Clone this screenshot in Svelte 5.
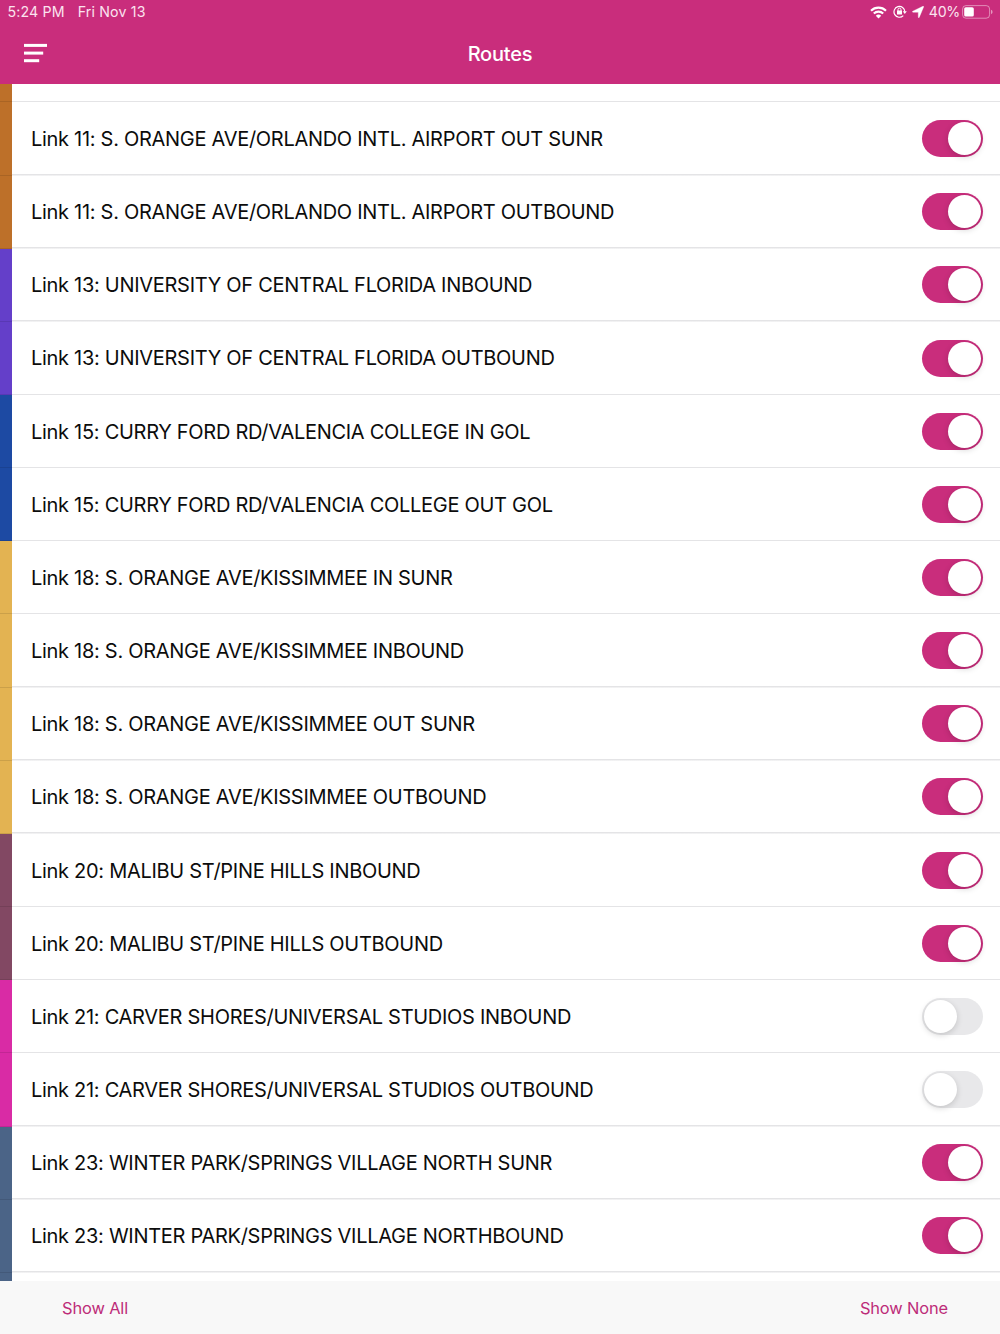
<script lang="ts">
	type Route = { name: string; color: string; on: boolean };

	let routes = $state<Route[]>([
		{ name: 'Link 11: S. ORANGE AVE/ORLANDO INTL. AIRPORT OUT SUNR', color: '#bd7029', on: true },
		{ name: 'Link 11: S. ORANGE AVE/ORLANDO INTL. AIRPORT OUTBOUND', color: '#bd7029', on: true },
		{ name: 'Link 13: UNIVERSITY OF CENTRAL FLORIDA INBOUND', color: '#643fc9', on: true },
		{ name: 'Link 13: UNIVERSITY OF CENTRAL FLORIDA OUTBOUND', color: '#643fc9', on: true },
		{ name: 'Link 15: CURRY FORD RD/VALENCIA COLLEGE IN GOL', color: '#1d4aa3', on: true },
		{ name: 'Link 15: CURRY FORD RD/VALENCIA COLLEGE OUT GOL', color: '#1d4aa3', on: true },
		{ name: 'Link 18: S. ORANGE AVE/KISSIMMEE IN SUNR', color: '#e3b352', on: true },
		{ name: 'Link 18: S. ORANGE AVE/KISSIMMEE INBOUND', color: '#e3b352', on: true },
		{ name: 'Link 18: S. ORANGE AVE/KISSIMMEE OUT SUNR', color: '#e3b352', on: true },
		{ name: 'Link 18: S. ORANGE AVE/KISSIMMEE OUTBOUND', color: '#e3b352', on: true },
		{ name: 'Link 20: MALIBU ST/PINE HILLS INBOUND', color: '#824863', on: true },
		{ name: 'Link 20: MALIBU ST/PINE HILLS OUTBOUND', color: '#824863', on: true },
		{ name: 'Link 21: CARVER SHORES/UNIVERSAL STUDIOS INBOUND', color: '#d92ba5', on: false },
		{ name: 'Link 21: CARVER SHORES/UNIVERSAL STUDIOS OUTBOUND', color: '#d92ba5', on: false },
		{ name: 'Link 23: WINTER PARK/SPRINGS VILLAGE NORTH SUNR', color: '#4b6487', on: true },
		{ name: 'Link 23: WINTER PARK/SPRINGS VILLAGE NORTHBOUND', color: '#4b6487', on: true }
	]);

	function setAll(on: boolean) {
		for (const r of routes) r.on = on;
	}
</script>

<div class="screen">
	<header>
		<div class="status">
			<span class="time">5:24 PM</span>
			<span class="date">Fri Nov 13</span>
			<div class="indicators">
				<svg class="wifi" width="17" height="13" viewBox="0 0 17 13" fill="none" stroke="#fff" stroke-width="2.1">
					<path d="M1 4.7a10.6 10.6 0 0 1 15 0" />
					<path d="M3.8 7.6a6.7 6.7 0 0 1 9.4 0" />
					<path d="M8.5 12.6 5.8 9.8a3.8 3.8 0 0 1 5.4 0z" fill="#fff" stroke="none" />
				</svg>
				<svg class="lock" width="14" height="13" viewBox="0 0 14 13" fill="none" stroke="#fff">
					<path d="M10.3 10.6A5.4 5.4 0 1 1 11.8 6.8" stroke-width="1.2" />
					<path d="M9.8 6.2h4l-2 2.7z" fill="#fff" stroke="none" />
					<rect x="4" y="5.6" width="5" height="3.9" rx=".5" fill="#fff" stroke="none" />
					<path d="M5 6V4.6a1.5 1.5 0 0 1 3 0V6" stroke-width="1" />
				</svg>
				<svg class="arrow" width="12" height="12" viewBox="0 0 12 12">
					<path d="M11.7.8 7.2 11.4q-.6.8-.9-.2V6.2H.9q-1-.4-.1-1L10.9.3q1-.3.8.5z" fill="#fff" stroke="#fff" stroke-width=".4" />
				</svg>
				<span class="percent">40%</span>
				<svg class="battery" width="31" height="14" viewBox="0 0 31 14" fill="none">
					<rect x=".6" y=".6" width="27" height="12.6" rx="3.4" stroke="#fff" stroke-opacity=".45" />
					<rect x="2.2" y="2.2" width="9.6" height="9.4" rx="1.6" fill="#fff" />
					<path d="M29 4.8q1.6.6 1.6 2.2t-1.6 2.2z" fill="#fff" fill-opacity=".5" />
				</svg>
			</div>
		</div>
		<div class="nav">
			<button class="menu" aria-label="Menu">
				<svg width="24" height="20" viewBox="0 0 24 20" fill="#fff">
					<rect x="0" y="0.9" width="23" height="3" />
					<rect x="0" y="8.6" width="19.2" height="3" />
					<rect x="0" y="16.2" width="15.2" height="3" />
				</svg>
			</button>
			<h1>Routes</h1>
		</div>
	</header>

	<main>
		<div class="row partial">
			<span class="stripe" style="background: #bd7029"></span>
		</div>
		{#each routes as route}
			<div class="row">
				<span class="stripe" style="background: {route.color}"></span>
				<span class="name">{route.name}</span>
				<button
					class="toggle"
					class:on={route.on}
					role="switch"
					aria-checked={route.on}
					aria-label={route.name}
					onclick={() => (route.on = !route.on)}
				>
					<span class="knob"></span>
				</button>
			</div>
		{/each}
		<div class="row last">
			<span class="stripe" style="background: #4b6487"></span>
		</div>
	</main>

	<footer>
		<button onclick={() => setAll(true)}>Show All</button>
		<button onclick={() => setAll(false)}>Show None</button>
	</footer>
</div>

<style>
	:global(body) {
		background: #fff;
	}
	.screen {
		width: 1000px;
		height: 1334px;
		display: flex;
		flex-direction: column;
		overflow: hidden;
		font-family: Inter, 'Liberation Sans', sans-serif;
		color: #0c0c0c;
	}
	button {
		border: 0;
		padding: 0;
		background: none;
		font: inherit;
		cursor: pointer;
	}
	header {
		height: 84px;
		flex: none;
		background: #c92d7c;
		color: #fff;
	}
	.status {
		height: 23px;
		display: flex;
		align-items: center;
		padding: 0 7px 0 7.5px;
		font-size: 14.2px;
		letter-spacing: 0.15px;
		color: #fbe3ef;
	}
	.date {
		margin-left: 13px;
	}
	.indicators {
		display: flex;
		align-items: center;
		margin-left: auto;
	}
	.wifi,
	.battery {
		margin-top: 1px;
	}
	.lock {
		margin-left: 6px;
	}
	.arrow {
		margin-left: 5px;
		margin-top: 1px;
	}
	.percent {
		margin: 0 2px 0 5px;
		letter-spacing: -0.3px;
	}
	.nav {
		height: 61px;
		display: grid;
		grid-template-columns: 100px 1fr 100px;
		align-items: center;
	}
	.menu {
		display: flex;
		padding-left: 23.6px;
		margin-top: -3px;
	}
	h1 {
		margin: 0;
		text-align: center;
		font-size: 20px;
		font-weight: 500;
		letter-spacing: -0.2px;
		line-height: 62px;
	}
	main {
		flex: 1;
		min-height: 0;
		overflow: hidden;
	}
	.row {
		height: 73.16px;
		box-sizing: border-box;
		display: flex;
		align-items: center;
		padding-right: 17px;
		background: linear-gradient(#e4e4e6, #e4e4e6) bottom / 100% 1.5px no-repeat;
	}
	.stripe {
		width: 12px;
		align-self: stretch;
		flex: none;
		box-shadow: inset 0 -1px rgba(0, 0, 0, 0.1);
	}
	.row.partial {
		height: 18.4px;
	}
	.name {
		flex: 1;
		padding-left: 19px;
		font-size: 20px;
		letter-spacing: -0.29px;
		white-space: nowrap;
	}
	.toggle {
		width: 61px;
		height: 37px;
		margin-bottom: 0.8px;
		border-radius: 19px;
		background: #e8e8ea;
		box-sizing: border-box;
		padding: 2px;
		display: flex;
	}
	.toggle.on {
		background: #c92d7c;
		justify-content: flex-end;
	}
	.knob {
		width: 33px;
		height: 33px;
		border-radius: 50%;
		background: #fff;
		box-shadow: 0 2px 6px rgba(0, 0, 0, 0.16);
	}
	footer {
		height: 53px;
		flex: none;
		box-sizing: border-box;
		display: flex;
		align-items: center;
		justify-content: space-between;
		padding: 0 52px 0 62px;
		background: #f8f8f8;
	}
	footer button {
		font-size: 16.4px;
		letter-spacing: -0.12px;
		color: #bd2c78;
	}
</style>
